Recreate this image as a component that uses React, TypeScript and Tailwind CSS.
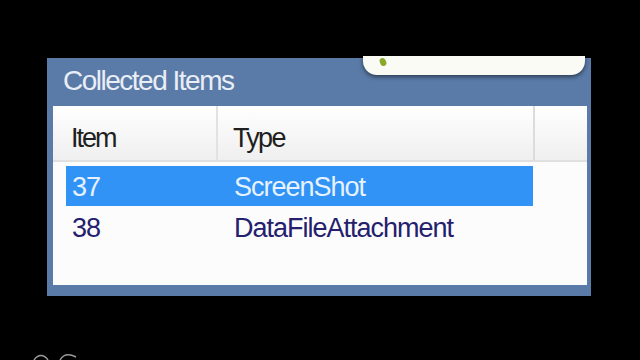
import React from 'react';

const rows = [
  { id: '37', type: 'ScreenShot', selected: true },
  { id: '38', type: 'DataFileAttachment', selected: false },
];

export default function App() {
  return (
    <div
      className="relative w-[640px] h-[360px] overflow-hidden bg-black pt-[58px] pl-[47px]"
      style={{ fontFamily: '"Liberation Sans", Arial, sans-serif' }}
    >
      {/* panel */}
      <div className="relative w-[544px] h-[238px] bg-[#5a7aa7] flex flex-col pl-[6px] pr-[4px] pb-[11px]">
        <div className="h-[48px] flex items-center pl-[10px] pb-[3px]">
          <span className="text-[28px] tracking-[-1.5px] text-[#e9eef6]">Collected Items</span>
        </div>

        {/* list */}
        <div className="flex-1 bg-[#fcfcfc] flex flex-col">
          {/* header */}
          <div className="h-[56px] flex bg-gradient-to-b from-[#ffffff] to-[#efefef] border-b-2 border-[#e0e0e0] text-[#1f1f1f]">
            <div className="w-[165px] flex items-center pt-[10px] pl-[18px] border-r-2 border-[#e2e2e2]">
              <span className="text-[27px] tracking-[-2px]">Item</span>
            </div>
            <div className="w-[317px] flex items-center pt-[10px] pl-[15px] border-r-2 border-[#dcdcdc]">
              <span className="text-[27px] tracking-[-1.7px]">Type</span>
            </div>
            <div className="flex-1" />
          </div>

          {/* rows */}
          <div className="flex flex-col pt-[4px] pl-[13px]">
            {rows.map((r) => (
              <div
                key={r.id}
                className={
                  r.selected
                    ? 'w-[467px] h-[40px] flex items-center pt-[3px] bg-[#3193f5] text-[#e6f2ff]'
                    : 'w-[467px] h-[41px] flex items-center pt-[3px] text-[#24206e]'
                }
              >
                <span className="w-[152px] pl-[6px] text-[27px] tracking-[-1px]">{r.id}</span>
                <span className="pl-[16px] text-[27px] tracking-[-1px]">{r.type}</span>
              </div>
            ))}
          </div>
        </div>

        {/* white pill overlapping the top */}
        <div className="absolute left-[316px] top-[-2px] w-[222px] h-[19px] bg-[#fbfbf6] rounded-b-[14px] shadow-[0_2px_4px_rgba(0,0,0,0.5)]">
          <div className="absolute left-[17px] top-[2px] w-[6px] h-[8px] rounded-full bg-[#8aa82a] rotate-[-25deg]" />
        </div>
      </div>

      {/* scribble bottom-left */}
      <svg className="absolute left-[30px] top-[348px]" width="60" height="14" viewBox="0 0 60 14">
        <path d="M4 12 C8 6, 14 6, 18 12 M30 12 C34 5, 40 6, 46 9" stroke="#9a9a9a" strokeWidth="1.5" fill="none" />
      </svg>
    </div>
  );
}
